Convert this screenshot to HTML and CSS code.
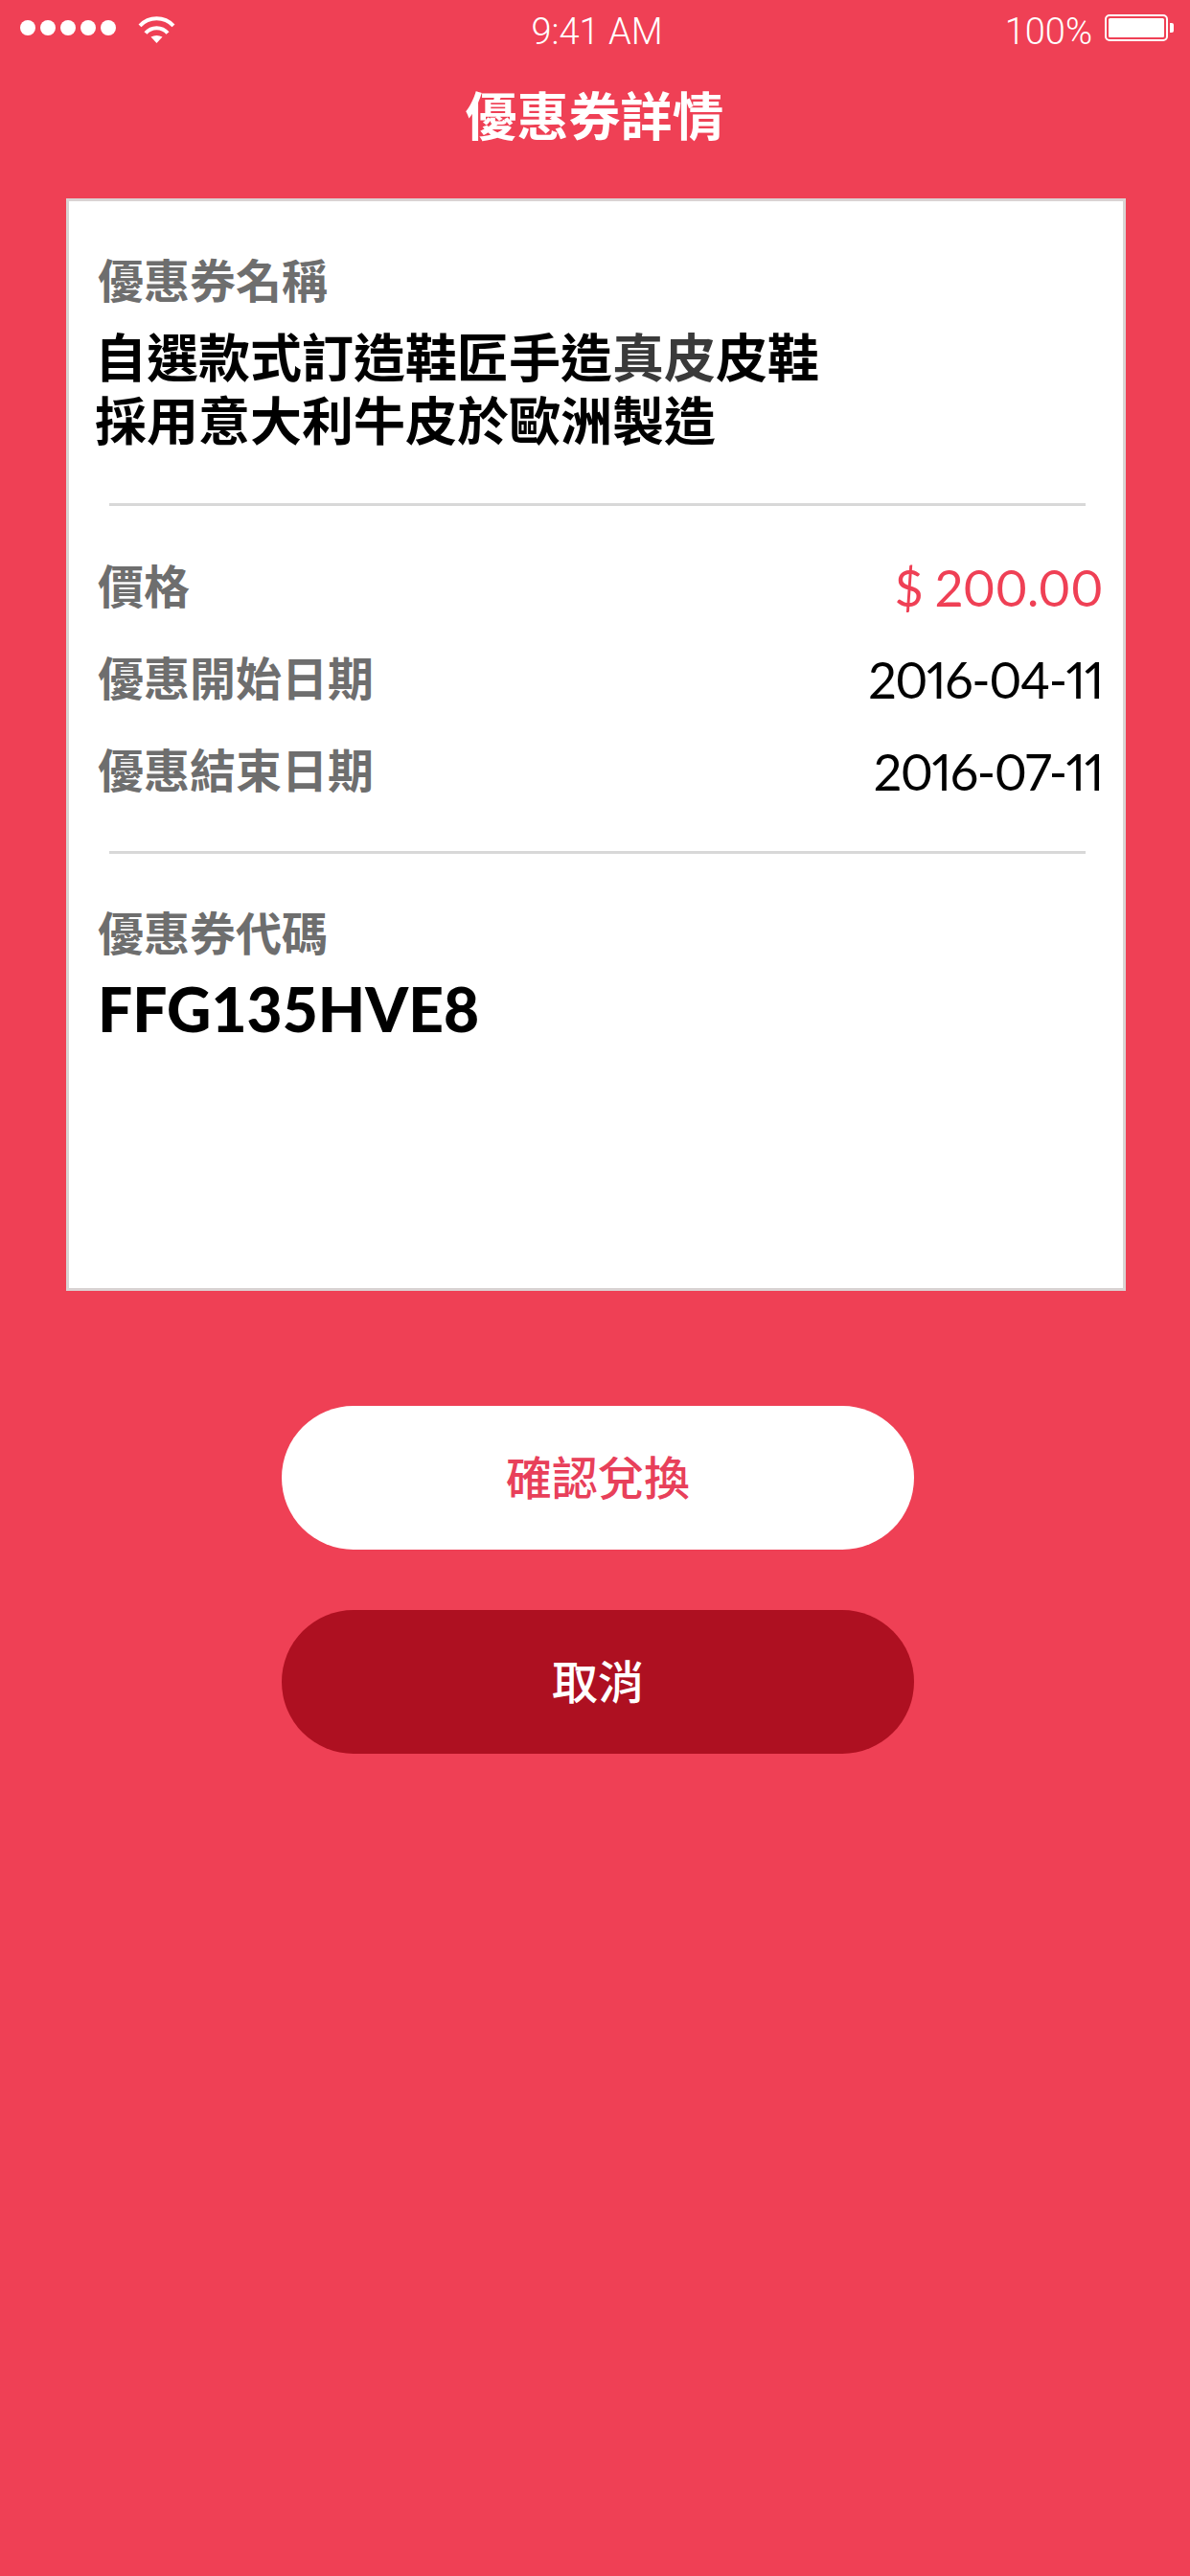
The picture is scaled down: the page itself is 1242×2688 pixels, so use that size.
FILE: index.html
```html
<!DOCTYPE html>
<html lang="zh-Hant">
<head>
  <meta charset="UTF-8" />
  <meta name="viewport" content="width=device-width, initial-scale=1.0"/>
  <title>優惠券詳情</title>
  <link rel="stylesheet" href="styles.css">
</head>
<body>

<div class="status-bar">
  <div class="status-left">
    <div class="signal">
      <span class="dot"></span>
      <span class="dot"></span>
      <span class="dot"></span>
      <span class="dot"></span>
      <span class="dot"></span>
    </div>
    <svg class="wifi" width="39" height="28" viewBox="0 0 39 28">
      <path d="M2 9.8A24 24 0 0 1 37 9.8" fill="none" stroke="#fff" stroke-width="4"/>
      <path d="M8 17.5A15 15 0 0 1 31 17.5" fill="none" stroke="#fff" stroke-width="4"/>
      <path d="M13.5 21.5Q19.5 18.5 25.5 21.5L19.5 28Z" fill="#fff"/>
    </svg>
  </div>
  <div class="status-time">9:41 AM</div>
  <div class="status-right">
    <span class="battery-text">100%</span>
    <svg class="battery" width="72" height="28" viewBox="0 0 72 28">
      <rect x="1" y="1" width="64" height="26" rx="4" fill="none" stroke="#fff" stroke-width="2"/>
      <rect x="4" y="4" width="58" height="20" rx="1.5" fill="#fff"/>
      <path d="M68 9h2a2 2 0 0 1 2 2v6a2 2 0 0 1-2 2h-2z" fill="#fff"/>
    </svg>
  </div>
</div>

<div class="header">優惠券詳情</div>

<div class="card">
  <div class="label">優惠券名稱</div>
  <div class="coupon-name">自選款式訂造鞋匠手造<span class="soft">真皮</span>皮鞋<br>採用意大利牛皮於歐洲製造</div>

  <div class="divider first"></div>

  <div class="row">
    <span class="label">價格</span>
    <span class="value price">$ 200.00</span>
  </div>
  <div class="row">
    <span class="label">優惠開始日期</span>
    <span class="value">2016-04-11</span>
  </div>
  <div class="row">
    <span class="label">優惠結束日期</span>
    <span class="value">2016-07-11</span>
  </div>

  <div class="divider"></div>

  <div class="label code-label">優惠券代碼</div>
  <div class="code">FFG135HVE8</div>
</div>

<div class="actions">
  <button class="btn btn-confirm">確認兌換</button>
  <button class="btn btn-cancel">取消</button>
</div>

</body>
</html>
```

FILE: styles.css
```css
* { box-sizing: border-box; margin: 0; padding: 0; }
body {
  background-color: #ef4055;
  font-family: Lato, "Noto Sans CJK TC", sans-serif;
  color: #fff;
  min-height: 100vh;
}
.status-bar {
  display: grid;
  grid-template-columns: 1fr auto 1fr;
  align-items: center;
  height: 58px;
  padding: 0 17px 0 21px;
}
.status-left {
  display: flex;
  align-items: center;
  gap: 23px;
}
.signal {
  display: flex;
  gap: 5px;
}
.dot {
  width: 16px;
  height: 16px;
  border-radius: 50%;
  background: #fff;
}
.wifi {
  margin-top: 4px;
}
.status-time {
  padding-top: 8px;
  font-family: Roboto, sans-serif;
  font-weight: 300;
  font-size: 38px;
  line-height: 50px;
}
.status-right {
  display: flex;
  align-items: center;
  justify-content: flex-end;
  gap: 13px;
}
.battery-text {
  padding-top: 8px;
  font-family: Roboto, sans-serif;
  font-weight: 300;
  font-size: 38px;
  line-height: 50px;
}
.header {
  height: 128px;
  padding: 0 1px 6px 0;
  line-height: 122px;
  text-align: center;
  font-family: "Noto Sans CJK TC", sans-serif;
  font-size: 54px;
  font-weight: 700;
}
.card {
  width: 1106px;
  height: 1140px;
  margin: 21px 0 0 69px;
  padding: 56px 21px 0 30px;
  background: #fff;
  border: 3px solid #d9d3d3;
  color: #000;
}
.label {
  font-family: "Noto Sans CJK TC", sans-serif;
  font-size: 48px;
  font-weight: 700;
  line-height: 48px;
  color: #6e6e6e;
}
.coupon-name {
  margin: 24px 0 0 -3px;
  font-family: "Noto Sans CJK TC", sans-serif;
  font-size: 54px;
  font-weight: 700;
  line-height: 66px;
}
.soft {
  color: #3a3a3a;
}
.divider {
  height: 3px;
  margin: 36px 18px 56px 12px;
  background: #d8d8d8;
}
.divider.first {
  margin-top: 55px;
  margin-bottom: 36px;
}
.row {
  display: flex;
  align-items: center;
  justify-content: space-between;
  height: 96px;
}
.row .label {
  padding-bottom: 6px;
  line-height: 57px;
}
.value {
  padding-top: 2px;
  font-size: 52px;
  line-height: 60px;
  letter-spacing: -1.4px;
  font-variant-numeric: proportional-nums;
}
.price {
  letter-spacing: -0.4px;
  color: #ef4055;
}
.code {
  margin-top: 28px;
  font-size: 64px;
  font-weight: 900;
  line-height: 60px;
}
.actions {
  display: flex;
  flex-direction: column;
  gap: 63px;
  width: 660px;
  margin: 120px 0 0 294px;
}
.btn {
  height: 150px;
  padding-bottom: 6px;
  border: none;
  border-radius: 75px;
  font-family: "Noto Sans CJK TC", sans-serif;
  font-size: 48px;
  font-weight: 500;
}
.btn-confirm {
  background: #fff;
  color: #e8405a;
}
.btn-cancel {
  background: #ae1021;
  color: #fff;
}
```
